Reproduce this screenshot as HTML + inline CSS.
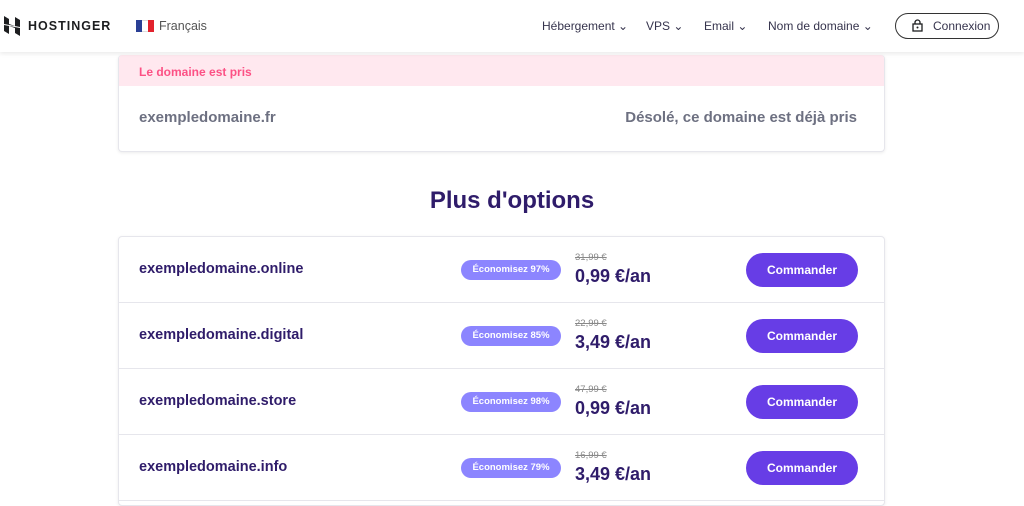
<!DOCTYPE html><html><head><style>
*{margin:0;padding:0;box-sizing:border-box}
body{width:1024px;height:493px;overflow:hidden;background:#fff;font-family:"Liberation Sans",sans-serif;position:relative}
.hdr{position:absolute;top:0;left:0;width:1024px;height:52px;background:#fff;box-shadow:0 2px 4px rgba(0,0,0,.08);z-index:2}
.a{position:absolute}
.nav{font-size:12px;color:#36344d;top:19px}
.card{position:absolute;left:118px;width:767px;border:1px solid #e6e6ec;border-radius:4px;box-shadow:0 1px 3px rgba(0,0,0,.08);background:#fff;overflow:hidden}
.row{position:relative;height:66px;border-bottom:1px solid #e6e6ec}
.dn{position:absolute;left:20px;top:24px;font-size:14.5px;font-weight:bold;color:#2f1c6a}
.bd{position:absolute;left:342px;top:23px;width:100px;height:20px;border-radius:10px;background:#8c85ff;color:#fff;font-size:9.5px;font-weight:bold;text-align:center;line-height:20px}
.op{position:absolute;left:456px;top:15px;font-size:9.5px;color:#888;text-decoration:line-through}
.np{position:absolute;left:456px;top:29px;font-size:18px;font-weight:bold;color:#2f1c6a}
.bt{position:absolute;left:627px;top:16px;width:112px;height:34px;border-radius:17px;background:#673de6;color:#fff;font-size:12px;font-weight:bold;text-align:center;line-height:34px}
</style></head><body>
<div class="hdr">
<svg class="a" style="left:4px;top:16px" width="16" height="20" viewBox="0 0 16 20"><path d="M0 0l5 3v5l6 2V1l5 3v7L0 8z M0 9l16 3v8l-5-3v-5l-6-2v8l-5-3z" fill="#1d1e20"/></svg>
<div class="a" style="left:28px;top:19px;font-size:12.5px;font-weight:bold;letter-spacing:1px;color:#1d1e20">HOSTINGER</div>
<div class="a" style="left:136px;top:20px;width:18px;height:12px;display:flex"><div style="flex:1;background:#2a3f95"></div><div style="flex:1;background:#fff;border-top:1px solid #ddd;border-bottom:1px solid #ddd"></div><div style="flex:1;background:#e2222d"></div></div>
<div class="a" style="left:159px;top:19px;font-size:12.5px;color:#555">Français</div>
<div class="a nav" style="left:542px">Hébergement ⌄</div>
<div class="a nav" style="left:646px">VPS ⌄</div>
<div class="a nav" style="left:704px">Email ⌄</div>
<div class="a nav" style="left:768px">Nom de domaine ⌄</div>
<div class="a" style="left:895px;top:13px;width:104px;height:26px;border:1px solid #333;border-radius:13px"></div>
<svg class="a" style="left:912px;top:19px" width="11" height="13" viewBox="0 0 11 13"><rect x="1" y="5" width="9" height="7" fill="none" stroke="#1d1e20" stroke-width="1.3"/><path d="M3 5V3.5a2.5 2.5 0 0 1 5 0V5" fill="none" stroke="#1d1e20" stroke-width="1.3"/><circle cx="5.5" cy="8.5" r="1" fill="#1d1e20"/></svg>
<div class="a" style="left:933px;top:19px;font-size:12px;color:#36344d">Connexion</div>
</div>
<div class="card" style="top:55px;height:97px;border-top:none">
<div style="height:31px;background:#ffe8ef;color:#fc5185;font-size:12px;font-weight:bold;padding:10px 20px">Le domaine est pris</div>
<div class="a" style="left:20px;top:54px;font-size:15px;font-weight:bold;color:#6d7081">exempledomaine.fr</div>
<div class="a" style="right:27px;top:54px;font-size:15px;font-weight:bold;color:#6d7081">Désolé, ce domaine est déjà pris</div>
</div>
<div class="a" style="left:0;width:1024px;top:187px;text-align:center;font-size:24px;font-weight:bold;color:#2f1c6a">Plus d'options</div>
<div class="card" style="top:236px;height:270px">
<div class="row"><div class="dn">exempledomaine.online</div><div class="bd">Économisez 97%</div><div class="op">31,99 €</div><div class="np">0,99 €/an</div><div class="bt">Commander</div></div>
<div class="row"><div class="dn">exempledomaine.digital</div><div class="bd">Économisez 85%</div><div class="op">22,99 €</div><div class="np">3,49 €/an</div><div class="bt">Commander</div></div>
<div class="row"><div class="dn">exempledomaine.store</div><div class="bd">Économisez 98%</div><div class="op">47,99 €</div><div class="np">0,99 €/an</div><div class="bt">Commander</div></div>
<div class="row"><div class="dn">exempledomaine.info</div><div class="bd">Économisez 79%</div><div class="op">16,99 €</div><div class="np">3,49 €/an</div><div class="bt">Commander</div></div>
</div>
</body></html>
